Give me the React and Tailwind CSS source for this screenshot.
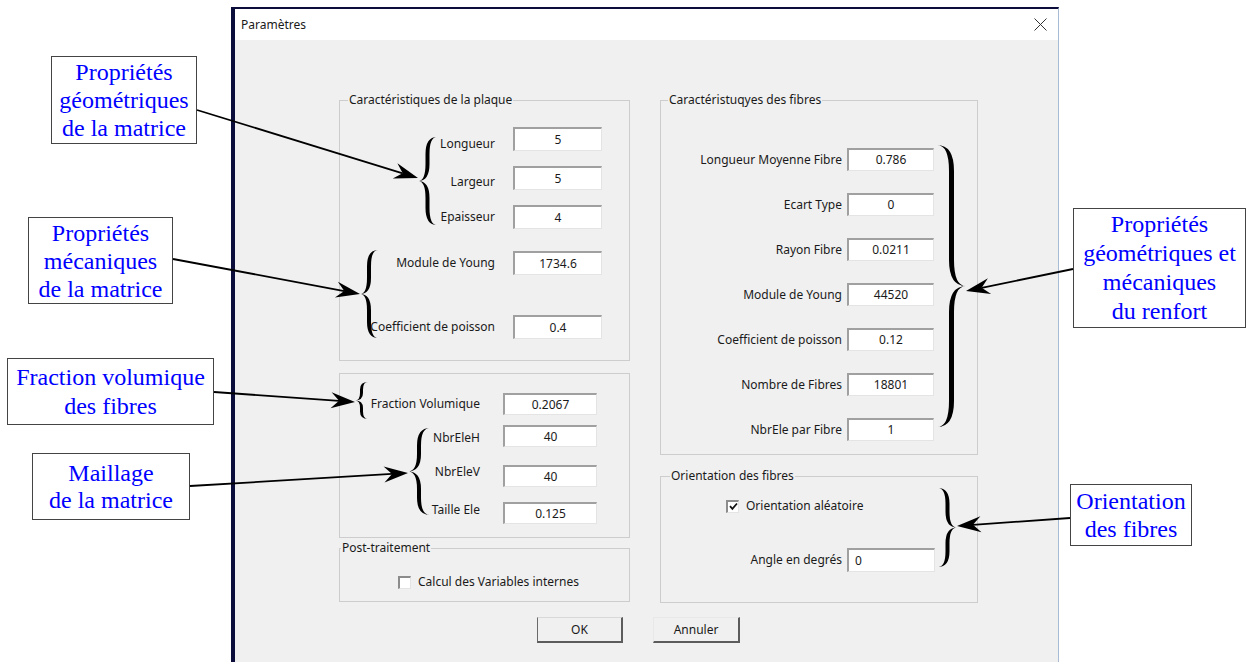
import React from 'react';

// champ de saisie façon Windows (bord enfoncé)
function Input({ value, w, h, left }) {
  return (
    <div
      className={`${w} ${h} shrink-0 bg-white border-t-2 border-l-2 border-r border-b border-t-[#a0a0a0] border-l-[#a0a0a0] border-r-[#e4e4e4] border-b-[#e4e4e4] flex items-center ${left ? 'pl-[6px]' : 'justify-center'}`}
    >
      {value}
    </div>
  );
}

function Row({ label, value, labelW, gap, w, h, className = '', labelCls = '', left }) {
  return (
    <div className={`flex items-center ${className}`}>
      <span className={`${labelW} ${labelCls} shrink-0 text-right whitespace-nowrap`}>{label}</span>
      <div className={gap}>
        <Input value={value} w={w} h={h} left={left} />
      </div>
    </div>
  );
}

function Check({ checked }) {
  return (
    <div className="w-[13px] h-[13px] shrink-0 bg-white border-t-2 border-l-2 border-r border-b border-t-[#8c8c8c] border-l-[#8c8c8c] border-r-[#e4e4e4] border-b-[#e4e4e4] flex items-center justify-center">
      {checked && (
        <svg width="9" height="9" viewBox="0 0 9 9">
          <path d="M1 4.2 L3.4 6.8 L8 1.5" fill="none" stroke="#111" strokeWidth="1.8" />
        </svg>
      )}
    </div>
  );
}

function Legend({ children, className = '' }) {
  return <legend className={`px-[1px] leading-[14px] ${className}`}>{children}</legend>;
}

// accolade calligraphique : x0 = extrémités, x1 = pointe
function bracePath(x0, x1, T, B, t) {
  const M = (T + B) / 2;
  const m = (x0 + x1) / 2;
  const r = Math.min(Math.abs(x1 - x0) * 0.9, (B - T) / 5);
  const a = m - t / 2;
  const b = m + t / 2;
  return `M${x0} ${T} Q${a} ${T} ${a} ${T + r} L${a} ${M - r} Q${a} ${M} ${x1} ${M} Q${a} ${M} ${a} ${M + r} L${a} ${B - r} Q${a} ${B} ${x0} ${B} Q${b} ${B} ${b} ${B - r} L${b} ${M + r} Q${b} ${M} ${x1} ${M} Q${b} ${M} ${b} ${M - r} L${b} ${T + r} Q${b} ${T} ${x0} ${T} Z`;
}

function Arrow({ x1, y1, x2, y2 }) {
  const dx = x2 - x1, dy = y2 - y1;
  const len = Math.hypot(dx, dy);
  const ux = dx / len, uy = dy / len;
  const nx = -uy, ny = ux;
  const L = 24, W = 8, I = 16;
  const bx = x2 - ux * L, by = y2 - uy * L;
  const ix = x2 - ux * I, iy = y2 - uy * I;
  const pts = [
    [x2, y2],
    [bx + nx * W, by + ny * W],
    [ix, iy],
    [bx - nx * W, by - ny * W],
  ]
    .map((p) => p.join(','))
    .join(' ');
  return (
    <g>
      <line x1={x1} y1={y1} x2={ix} y2={iy} stroke="#000" strokeWidth="1.8" />
      <polygon points={pts} fill="#000" />
    </g>
  );
}

const braces = [
  [437, 418, 137, 225, 4],
  [378, 360, 250, 338, 4],
  [368, 355, 382, 419, 3],
  [430, 408, 428, 515, 4],
  [937, 966, 145, 427, 5],
  [938, 957, 488, 567, 4],
];

const arrows = [
  [197, 110, 418, 178],
  [173, 259, 360, 294],
  [214, 392, 355, 402],
  [190, 486, 408, 473],
  [1073, 269, 966, 291],
  [1070, 518, 957, 526],
];

const notes = [
  { cls: 'left-[51px] top-[56px] w-[146px] h-[88px] leading-[28px]', lines: ['Propriétés', 'géométriques', 'de la matrice'] },
  { cls: 'left-[28px] top-[217px] w-[145px] h-[87px] leading-[28px]', lines: ['Propriétés', 'mécaniques', 'de la matrice'] },
  { cls: 'left-[7px] top-[358px] w-[207px] h-[67px] leading-[29px]', lines: ['Fraction volumique', 'des fibres'] },
  { cls: 'left-[32px] top-[453px] w-[158px] h-[67px] leading-[27px]', lines: ['Maillage', 'de la matrice'] },
  { cls: 'left-[1073px] top-[208px] w-[173px] h-[120px] leading-[29px]', lines: ['Propriétés', 'géométriques et', 'mécaniques', 'du renfort'] },
  { cls: 'left-[1070px] top-[484px] w-[122px] h-[62px] leading-[28px]', lines: ['Orientation', 'des fibres'] },
];

const fibres = [
  ['Longueur Moyenne Fibre', '0.786'],
  ['Ecart Type', '0'],
  ['Rayon Fibre', '0.0211'],
  ['Module de Young', '44520'],
  ['Coefficient de poisson', '0.12'],
  ['Nombre de Fibres', '18801'],
  ['NbrEle par Fibre', '1'],
];

export default function App() {
  return (
    <div className="relative w-[1247px] h-[662px] bg-white overflow-hidden font-['Noto_Sans','Liberation_Sans',sans-serif] text-[12px] text-[#1a1a1a]">
      <div className="pl-[231px] pt-[7px]">
        <div className="w-[828px] h-[655px] flex flex-col border-l-4 border-t-2 border-r border-l-[#0b0d3b] border-t-[#0b0d3b] border-r-[#a7bbd5]">
          {/* barre de titre */}
          <div className="h-[31px] shrink-0 bg-white flex items-center pl-[6px]">
            <span>Paramètres</span>
            <svg className="ml-auto mr-[11px]" width="13" height="13" viewBox="0 0 13 13">
              <path d="M0.5 0.5 L12.5 12.5 M12.5 0.5 L0.5 12.5" stroke="#333" strokeWidth="1" />
            </svg>
          </div>

          <div className="flex-1 bg-[#f0f0f0] pl-[104px] pt-[53px]">
            <div className="flex gap-[30px]">
              {/* colonne gauche */}
              <div className="w-[291px] flex flex-col">
                <fieldset className="h-[268px] border border-[#cdcdcd]">
                  <Legend className="ml-[8px]">Caractéristiques de la plaque</Legend>
                  <Row className="mt-[20px]" labelCls="translate-y-[5px]" label="Longueur" value="5" labelW="w-[155px]" gap="ml-[18px]" w="w-[89px]" h="h-[24px]" />
                  <Row className="mt-[15px]" labelCls="translate-y-[4px]" label="Largeur" value="5" labelW="w-[155px]" gap="ml-[18px]" w="w-[89px]" h="h-[24px]" />
                  <Row className="mt-[15px]" label="Epaisseur" value="4" labelW="w-[155px]" gap="ml-[18px]" w="w-[89px]" h="h-[24px]" />
                  <Row className="mt-[22px]" label="Module de Young" value="1734.6" labelW="w-[155px]" gap="ml-[18px]" w="w-[89px]" h="h-[24px]" />
                  <Row className="mt-[40px]" label="Coefficient de poisson" value="0.4" labelW="w-[155px]" gap="ml-[18px]" w="w-[89px]" h="h-[24px]" />
                </fieldset>

                <div className="mt-[12px] h-[165px] border border-[#cdcdcd] pt-[19px]">
                  <Row label="Fraction Volumique" value="0.2067" labelW="w-[140px]" gap="ml-[23px]" w="w-[94px]" h="h-[22px]" />
                  <Row className="mt-[10px]" labelCls="translate-y-[2px]" label="NbrEleH" value="40" labelW="w-[140px]" gap="ml-[23px]" w="w-[94px]" h="h-[22px]" />
                  <Row className="mt-[18px]" labelCls="-translate-y-[4px]" label="NbrEleV" value="40" labelW="w-[140px]" gap="ml-[23px]" w="w-[94px]" h="h-[22px]" />
                  <Row className="mt-[15px]" labelCls="-translate-y-[3px]" label="Taille Ele" value="0.125" labelW="w-[140px]" gap="ml-[23px]" w="w-[94px]" h="h-[22px]" />
                </div>

                <fieldset className="mt-[3px] h-[61px] border border-[#cdcdcd]">
                  <Legend className="ml-[1px]">Post-traitement</Legend>
                  <div className="mt-[18px] ml-[58px] flex items-center gap-[7px]">
                    <Check />
                    <span>Calcul des Variables internes</span>
                  </div>
                </fieldset>
              </div>

              {/* colonne droite */}
              <div className="w-[318px] flex flex-col">
                <fieldset className="h-[362px] border border-[#cdcdcd]">
                  <Legend className="ml-[7px]">Caractéristuqyes des fibres</Legend>
                  <div className="mt-[41px] flex flex-col gap-[22px]">
                    {fibres.map(([l, v]) => (
                      <Row key={l} label={l} value={v} labelW="w-[181px]" gap="ml-[5px]" w="w-[87px]" h="h-[23px]" />
                    ))}
                  </div>
                </fieldset>

                <fieldset className="mt-[14px] h-[134px] border border-[#cdcdcd]">
                  <Legend className="ml-[9px]">Orientation des fibres</Legend>
                  <div className="mt-[14px] ml-[65px] flex items-center gap-[7px]">
                    <Check checked />
                    <span>Orientation aléatoire</span>
                  </div>
                  <Row className="mt-[33px]" label="Angle en degrés" value="0" labelW="w-[181px]" gap="ml-[5px]" w="w-[88px]" h="h-[24px]" left />
                </fieldset>
              </div>
            </div>

            <div className="mt-[14px] ml-[198px] flex gap-[30px]">
              <button className="w-[86px] h-[26px] bg-[#f0f0f0] border-l border-t border-r-2 border-b-2 border-l-[#6a6a6a] border-t-[#d8d8d8] border-r-[#5c5c5c] border-b-[#5c5c5c]">
                OK
              </button>
              <button className="w-[87px] h-[26px] bg-[#f0f0f0] border-l border-t border-r-2 border-b-2 border-l-[#e8e8e8] border-t-[#e8e8e8] border-r-[#5c5c5c] border-b-[#5c5c5c]">
                Annuler
              </button>
            </div>
          </div>
        </div>
      </div>

      {/* annotations */}
      {notes.map((n, i) => (
        <div
          key={i}
          className={`absolute ${n.cls} bg-white border border-[#444] flex flex-col items-center justify-center text-[24px] text-[#0000ff] font-['Liberation_Serif','Times_New_Roman',serif]`}
        >
          {n.lines.map((l) => (
            <span key={l} className="whitespace-nowrap">{l}</span>
          ))}
        </div>
      ))}

      <svg className="absolute left-0 top-0 pointer-events-none" width="1247" height="662">
        {braces.map(([x0, x1, T, B, t], i) => (
          <path key={i} d={bracePath(x0, x1, T, B, t)} fill="#000" />
        ))}
        {arrows.map(([a, b, c, d], i) => (
          <Arrow key={i} x1={a} y1={b} x2={c} y2={d} />
        ))}
      </svg>
    </div>
  );
}
